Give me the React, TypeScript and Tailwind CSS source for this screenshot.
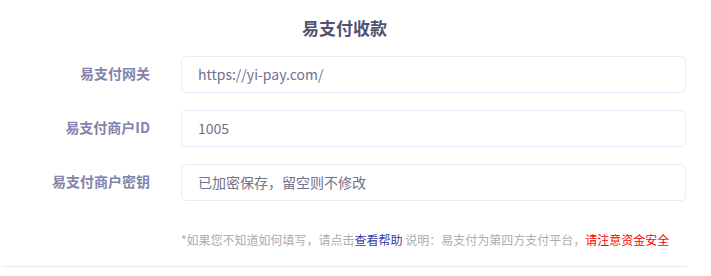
import React from 'react';

const fields = [
  { label: '易支付网关', value: 'https://yi-pay.com/' },
  { label: '易支付商户ID', value: '1005' },
  { label: '易支付商户密钥', value: '已加密保存，留空则不修改' },
];

const App: React.FC = () => {
  return (
    <div
      className="w-[711px] h-[276px] bg-white"
      style={{ fontFamily: '"Noto Sans CJK SC", "Noto Sans", sans-serif' }}
    >
      <div className="w-[685px] ml-[2px] border-b border-[#e9e7f9] pb-[17px]">
        {/* Title */}
        <h2 className="pt-[16px] h-[56px] text-center text-[17px] leading-[24px] font-bold text-[#505273]">
          易支付收款
        </h2>

        {/* Fields */}
        <div className="flex flex-col gap-[17px]">
          {fields.map((f) => (
            <div key={f.label} className="flex items-center">
              <label className="w-[148px] shrink-0 text-right text-[14px] font-bold text-[#8184ad] -mt-[3px]">
                {f.label}
              </label>
              <div className="ml-[31px] w-[505px] h-[37px] flex items-center px-[16px] border border-[#ebe8fb] rounded-[5px] text-[14px] text-[#70728c]">
                {f.value}
              </div>
            </div>
          ))}
        </div>

        {/* Help */}
        <p className="mt-[30px] ml-[179px] text-[12px] leading-[18px] text-[#acacac] whitespace-nowrap">
          *如果您不知道如何填写，请点击<span className="text-[#3b3aa8]">查看帮助</span> 说明：易支付为第四方支付平台，<span className="text-[#ff0000]">请注意资金安全</span>
        </p>
      </div>
    </div>
  );
};

export default App;
